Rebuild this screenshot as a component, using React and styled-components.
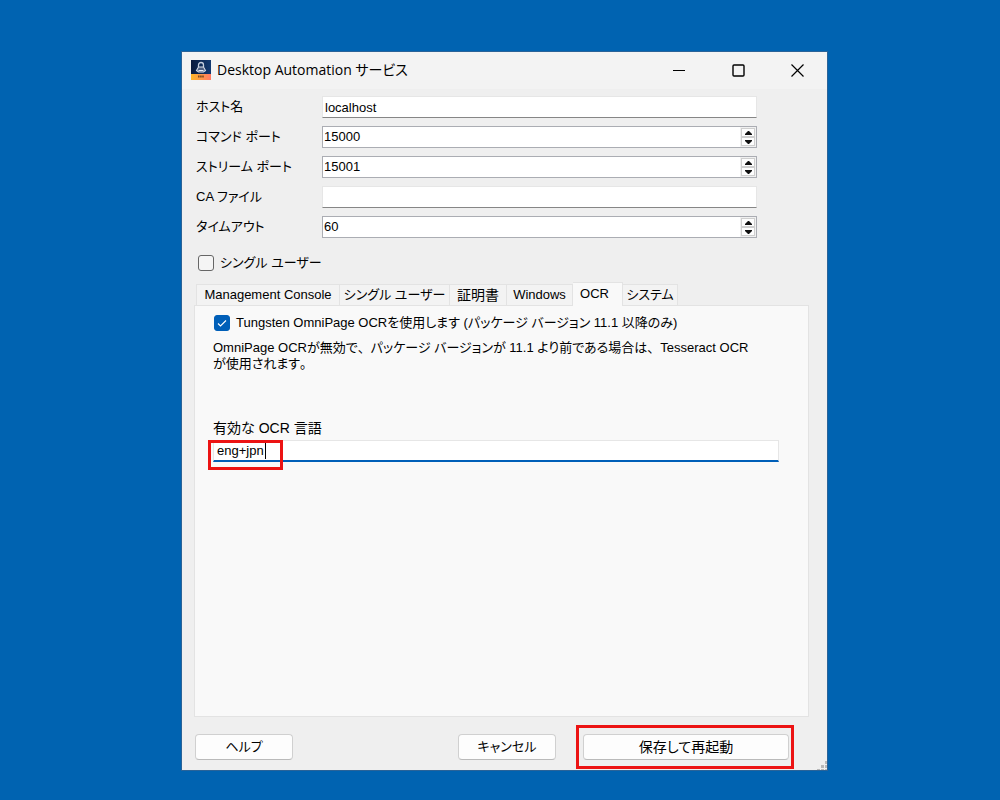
import React, { useState } from 'react';
import styled, { createGlobalStyle, css } from 'styled-components';

const tabs = [
    { id: 'console', label: 'Management Console', width: 144 },
    { id: 'single', label: 'シングル ユーザー', width: 110 },
    { id: 'cert', label: '証明書', width: 57, large: true },
    { id: 'windows', label: 'Windows', width: 66 },
    { id: 'ocr', label: 'OCR', width: 50 },
    { id: 'system', label: 'システム', width: 55 }
];

const SpinField = ({ id, label, value, onChange }) => {
    return (
        <StRow>
            <StLabel htmlFor={id}>{label}</StLabel>
            <StSpin>
                <StSpinInput id={id} type="number" value={value} onChange={(e) => onChange(Number(e.target.value))} />
                <StSpinButtons>
                    <StSpinButton type="button" aria-label="+" onClick={() => onChange(value + 1)}>
                        <svg width="7" height="4" viewBox="0 0 7 4">
                            <path d="M3 0H4L7 3V4H0V3Z" fill="#111" />
                        </svg>
                    </StSpinButton>
                    <StSpinButton type="button" aria-label="-" onClick={() => onChange(value - 1)}>
                        <svg width="7" height="4" viewBox="0 0 7 4">
                            <path d="M0 0H7V1L4 4H3L0 1Z" fill="#111" />
                        </svg>
                    </StSpinButton>
                </StSpinButtons>
            </StSpin>
        </StRow>
    );
};

const App = () => {
    const [host, setHost] = useState('localhost');
    const [commandPort, setCommandPort] = useState(15000);
    const [streamPort, setStreamPort] = useState(15001);
    const [caFile, setCaFile] = useState('');
    const [timeout, setTimeoutValue] = useState(60);
    const [single, setSingle] = useState(false);
    const [activeTab, setActiveTab] = useState('ocr');
    const [useOmniPage, setUseOmniPage] = useState(true);
    const [languages, setLanguages] = useState('eng+jpn');

    return (
        <StDesktop>
            <GlobalStyle />
            <StWindow>
                <StTitleBar>
                    <svg width="20" height="20" viewBox="0 0 20 20">
                        <defs>
                            <linearGradient id="navy" x1="0" y1="0" x2="1" y2="0">
                                <stop offset="0" stopColor="#0a1a3c" />
                                <stop offset="1" stopColor="#123a72" />
                            </linearGradient>
                            <linearGradient id="sun" x1="0" y1="0" x2="1" y2="0">
                                <stop offset="0" stopColor="#ffb627" />
                                <stop offset="1" stopColor="#ff7a66" />
                            </linearGradient>
                        </defs>
                        <rect width="20" height="14" fill="url(#navy)" />
                        <rect y="14" width="20" height="6" fill="url(#sun)" />
                        <path d="M7.500 7V5a2.500 2.500 0 0 1 5 0v2" fill="none" stroke="#c5cede" strokeWidth="1.300" />
                        <path d="M5.500 10.500L7.500 7h5l2 3.500-2 1.500h-5Z" fill="#4c5e82" stroke="#d5dce8" strokeWidth="1.100" />
                        <path d="M7.500 10.500h5" stroke="#e8ecf4" />
                        <path d="M7 16.500h6" stroke="#7d4a20" strokeWidth="2" strokeDasharray="1.600 .5" />
                    </svg>
                    <StTitle>Desktop Automation サービス</StTitle>
                    <StCaptionButton type="button" aria-label="最小化">
                        <svg width="13" height="13" viewBox="0 0 13 13">
                            <path d="M0 6.500h12" stroke="#000" />
                        </svg>
                    </StCaptionButton>
                    <StCaptionButton type="button" aria-label="最大化">
                        <svg width="13" height="13" viewBox="0 0 13 13">
                            <rect x="1" y="1" width="11" height="11" rx="1" fill="none" stroke="#000" strokeWidth="1.400" />
                        </svg>
                    </StCaptionButton>
                    <StCaptionButton type="button" aria-label="閉じる">
                        <svg width="13" height="13" viewBox="0 0 13 13">
                            <path d="M0.500 0.500l12 12M12.500 0.500l-12 12" stroke="#000" strokeWidth="1.200" />
                        </svg>
                    </StCaptionButton>
                </StTitleBar>

                <StForm>
                    <StRow>
                        <StLabel htmlFor="host">ホスト名</StLabel>
                        <StInput id="host" type="text" value={host} onChange={(e) => setHost(e.target.value)} />
                    </StRow>
                    <SpinField id="commandPort" label="コマンド ポート" value={commandPort} onChange={setCommandPort} />
                    <SpinField id="streamPort" label="ストリーム ポート" value={streamPort} onChange={setStreamPort} />
                    <StRow>
                        <StLabel htmlFor="caFile">CA ファイル</StLabel>
                        <StInput id="caFile" type="text" value={caFile} onChange={(e) => setCaFile(e.target.value)} />
                    </StRow>
                    <SpinField id="timeout" label="タイムアウト" value={timeout} onChange={setTimeoutValue} />
                </StForm>

                <StSingleUser>
                    <StCheckbox type="checkbox" checked={single} onChange={(e) => setSingle(e.target.checked)} />
                    シングル ユーザー
                </StSingleUser>

                <StTabs role="tablist">
                    {tabs.map((tab) => (
                        <StTab
                            key={tab.id}
                            type="button"
                            role="tab"
                            aria-selected={tab.id === activeTab}
                            $active={tab.id === activeTab}
                            $width={tab.width}
                            $large={tab.large}
                            onClick={() => setActiveTab(tab.id)}
                        >
                            {tab.label}
                        </StTab>
                    ))}
                </StTabs>
                <StPanel role="tabpanel">
                    <StCheckLabel>
                        <StCheckWrap>
                            <StCheckbox
                                type="checkbox"
                                checked={useOmniPage}
                                onChange={(e) => setUseOmniPage(e.target.checked)}
                            />
                            {useOmniPage && (
                                <StCheckMark width="16" height="16" viewBox="0 0 16 16">
                                    <path d="M4 8.500l2.500 2.500 5.500-5.500" fill="none" stroke="#fff" strokeWidth="1.100" />
                                </StCheckMark>
                            )}
                        </StCheckWrap>
                        Tungsten OmniPage OCRを使用します (パッケージ バージョン 11.1 以降のみ)
                    </StCheckLabel>
                    <StNote>
                        OmniPage OCRが無効で<StFullWidth>、</StFullWidth>パッケージ バージョンが 11.1 より前である場合は
                        <StFullWidth>、</StFullWidth>Tesseract OCR
                        <br />
                        が使用されます<StFullWidth>。</StFullWidth>
                    </StNote>
                    <StLanguageLabel htmlFor="languages">有効な OCR 言語</StLanguageLabel>
                    <StLanguageWrap>
                        <StLanguageInput
                            id="languages"
                            type="text"
                            value={languages}
                            onChange={(e) => setLanguages(e.target.value)}
                        />
                        <StCaret />
                        <StInputMark />
                    </StLanguageWrap>
                </StPanel>

                <StFooter>
                    <StButton type="button">ヘルプ</StButton>
                    <StSpacer />
                    <StButton type="button">キャンセル</StButton>
                    <StSaveMark>
                        <StButton type="button" $wide>
                            保存して再起動
                        </StButton>
                    </StSaveMark>
                </StFooter>
                <StGrip width="10" height="10" viewBox="0 0 10 10">
                    <path d="M8 1h2v3H8ZM4 5h3v3H4ZM8 5h2v3H8ZM0 9h3v1H0ZM4 9h3v1H4ZM8 9h2v1H8Z" fill="#b8b8b8" />
                </StGrip>
            </StWindow>
        </StDesktop>
    );
};

export default App;

const GlobalStyle = createGlobalStyle`
    * {
        box-sizing: border-box;
    }

    body {
        margin: 0;
        background-color: #0063b1;
    }

    body, button, input {
        font-family: 'Liberation Sans', 'Noto Sans CJK JP', sans-serif;
        font-size: 13px;
        line-height: 16px;
        font-feature-settings: 'palt';
        color: #000;
    }
`;

const StDesktop = styled.div`
    display: flex;
    min-height: 100vh;
    padding: 52px 173px 30px 182px;
`;

const StWindow = styled.div`
    position: relative;
    display: flex;
    flex-direction: column;
    flex: 1;
    min-width: 0;
    background-color: #efefef;
    box-shadow: 0 0 0 1px #2a6398;
`;

const StTitleBar = styled.div`
    display: flex;
    align-items: center;
    height: 37px;
    padding: 0 0 1px 9px;
    background-color: #f3f3f3;
`;

const StTitle = styled.div`
    flex: 1;
    padding-left: 6px;
    font-family: 'Open Sans', 'Noto Sans CJK JP', sans-serif;
    font-size: 14px;
    line-height: 20px;
    white-space: nowrap;
`;

const StCaptionButton = styled.button`
    display: flex;
    align-items: center;
    justify-content: center;
    width: 59px;
    height: 36px;
    padding: 0;
    border: 0;
    background-color: transparent;
`;

const StForm = styled.div`
    display: flex;
    flex-direction: column;
    gap: 8px;
    padding: 7px 70px 0 14px;
`;

const StRow = styled.div`
    display: grid;
    grid-template-columns: 126px 1fr;
    align-items: center;
    height: 22px;
`;

const StLabel = styled.label`
    white-space: nowrap;
`;

const StInput = styled.input`
    width: 100%;
    height: 22px;
    padding: 0 2px;
    outline: none;
    border: 1px solid #e6e6e6;
    border-bottom-color: #868686;
    background-color: white;
`;

const StSpin = styled.div`
    display: flex;
    height: 22px;
    border: 1px solid #abadb3;
    background-color: white;
`;

const StSpinInput = styled.input`
    flex: 1;
    min-width: 0;
    padding: 0 1px;
    outline: none;
    border: 0;
    background-color: transparent;
    appearance: textfield;

    &::-webkit-inner-spin-button {
        appearance: none;
        margin: 0;
    }
`;

const StSpinButtons = styled.div`
    display: flex;
    flex-direction: column;
    width: 16px;
    padding: 1px;
    background-color: #f0f0f0;
`;

const StSpinButton = styled.button`
    display: flex;
    flex: 1;
    align-items: center;
    justify-content: center;
    min-height: 0;
    padding: 0;
    border: 1px solid #cfcfcf;
    background-color: #fdfdfd;
`;

const StCheckLabel = styled.label`
    display: flex;
    align-items: center;
    gap: 6px;
    height: 18px;
    white-space: nowrap;
`;

const StSingleUser = styled(StCheckLabel)`
    margin: 16px 16px 0;
`;

const StCheckWrap = styled.span`
    position: relative;
    display: flex;
`;

const StCheckbox = styled.input`
    appearance: none;
    width: 16px;
    height: 16px;
    margin: 0;
    border: 1px solid #666;
    border-radius: 3px;
    background-color: #f5f5f5;

    &:checked {
        border-color: #005fb8;
        background-color: #005fb8;
    }
`;

const StCheckMark = styled.svg`
    position: absolute;
    top: 0;
    left: 0;
    pointer-events: none;
`;

const StTabs = styled.div`
    display: flex;
    align-items: flex-end;
    margin-top: 10px;
    padding-left: 14px;
`;

const StTab = styled.button`
    width: ${(props) => props.$width}px;
    height: 21px;
    padding: 0;
    border: 1px solid #e3e3e3;
    border-width: 1px 1px 0 0;
    background-color: #f3f3f3;
    font-size: ${(props) => (props.$large ? '14px' : '13px')};
    white-space: nowrap;

    &:first-child {
        border-left-width: 1px;
    }

    ${(props) =>
        props.$active &&
        css`
            z-index: 1;
            height: 24px;
            margin-bottom: -1px;
            padding: 0 6px 2px 0;
            background-color: #f9f9f9;
        `}
`;

const StPanel = styled.div`
    flex: 1;
    margin: 0 18px 0 12px;
    padding: 8px 29px 0 18px;
    border: 1px solid #e3e3e3;
    background-color: #f9f9f9;

    ${StCheckLabel} {
        padding-left: 1px;
    }
`;

const StNote = styled.p`
    margin: 8px 0 48px;
    white-space: nowrap;
`;

const StFullWidth = styled.span`
    font-feature-settings: normal;
`;

const StLanguageLabel = styled.label`
    display: block;
    height: 20px;
    font-size: 14px;
`;

const StLanguageWrap = styled.div`
    position: relative;
`;

const StLanguageInput = styled(StInput)`
    display: block;
    padding: 0 3px;
    border-bottom: 2px solid #005fb8;
`;

const StCaret = styled.span`
    position: absolute;
    top: 3px;
    left: 52px;
    width: 1px;
    height: 16px;
    background-color: #000;
`;

const StInputMark = styled.span`
    position: absolute;
    top: 0;
    left: -5px;
    width: 75px;
    height: 30px;
    border: 3px solid #ec1313;
    pointer-events: none;
`;

const StFooter = styled.div`
    display: flex;
    align-items: center;
    padding: 8px 33px 1px 13px;
`;

const StSpacer = styled.div`
    flex: 1;
`;

const StButton = styled.button`
    width: ${(props) => (props.$wide ? '206px' : '98px')};
    height: 26px;
    padding: 0;
    border: 1px solid #d0d0d0;
    border-bottom-color: #bababa;
    border-radius: 4px;
    background-color: #fdfdfd;
    font-size: ${(props) => (props.$wide ? '14px' : '13px')};
`;

const StSaveMark = styled.div`
    margin-left: 20px;
    padding: 6px 2px 6px 4px;
    border: 3px solid #ec1313;
`;

const StGrip = styled.svg`
    position: absolute;
    right: 0;
    bottom: 0;
`;
